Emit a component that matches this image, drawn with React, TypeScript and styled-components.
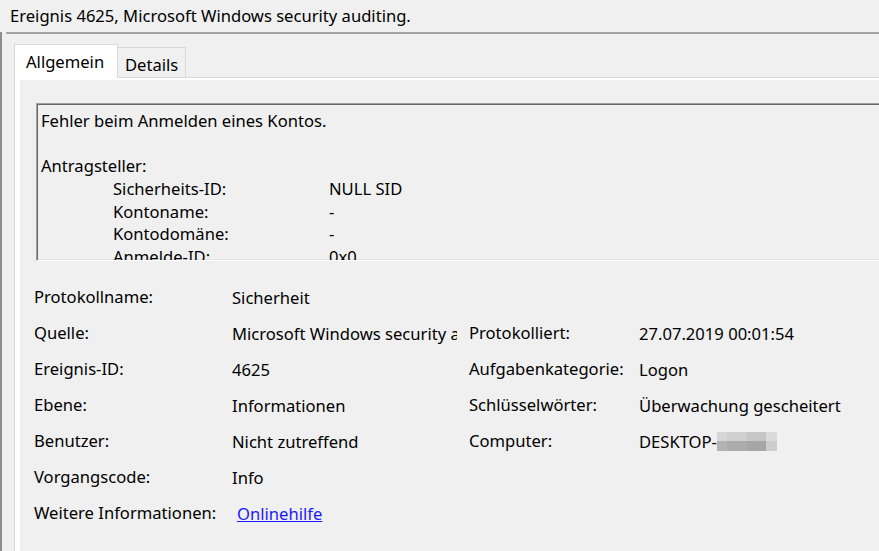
import React from 'react'
import styled, { createGlobalStyle } from 'styled-components'

const GlobalStyle = createGlobalStyle`
  html, body {
    margin: 0;
    padding: 0;
    background: #f0f0f0;
    overflow: hidden;
  }
  body {
    font-family: 'Noto Sans', 'Open Sans', sans-serif;
    font-size: 16.6px;
    color: #000;
  }
`

const Window = styled.div`
  display: flex;
  flex-direction: column;
  height: 100vh;
  width: 100vw;
`

const Title = styled.div`
  height: 32px;
  line-height: 32px;
  padding-left: 10px;
  white-space: nowrap;
  flex: none;
`

const Pane = styled.div`
  flex: 1;
  display: flex;
  flex-direction: column;
  border-left: 2px solid #8c8c8c;
  min-height: 0;
`

const Rule = styled.div`
  height: 2px;
  margin-left: 4px;
  background: #a3a3a3;
  flex: none;
`

const Body = styled.div`
  flex: 1;
  display: flex;
  flex-direction: column;
  padding: 10px 0 0 12px;
  min-height: 0;
`

const TabStrip = styled.div`
  display: flex;
  align-items: flex-end;
  height: 33px;
  flex: none;
`

const Tab = styled.div<{ $active?: boolean }>`
  box-sizing: border-box;
  position: relative;
  z-index: ${p => (p.$active ? 1 : 0)};
  height: ${p => (p.$active ? '34px' : '30px')};
  margin-bottom: ${p => (p.$active ? '-1px' : '0')};
  margin-left: ${p => (p.$active ? '0' : '-1px')};
  width: ${p => (p.$active ? '104px' : '69px')};
  padding: 6px 0 0 ${p => (p.$active ? '11px' : '7px')};
  line-height: 22px;
  background: ${p => (p.$active ? '#ffffff' : '#f0f0f0')};
  border: 1px solid #d9d9d9;
  border-bottom: none;
`

const Panel = styled.div`
  flex: 1;
  display: flex;
  border-top: 1px solid #d9d9d9;
  border-left: 1px solid #d9d9d9;
  background: #ffffff;
  padding: 2px 0 0 5px;
  min-height: 0;
`

const PanelInner = styled.div`
  flex: 1;
  background: #f0f0f0;
  padding: 23px 0 0 14px;
  overflow: hidden;
`

const DescBox = styled.div`
  box-sizing: border-box;
  width: 900px;
  height: 158px;
  margin-left: 2px;
  border-top: 1px solid #a0a0a0;
  border-left: 1px solid #a0a0a0;
  border-bottom: 1px solid #ffffff;
  box-shadow: inset 1px 1px 0 #696969, inset 0 -1px 0 #e3e3e3;
  padding: 6px 0 0 4px;
  overflow: hidden;
  line-height: 22.7px;
  white-space: nowrap;
`

const DescLine = styled.div`
  height: 22.7px;
`

const DescField = styled.div`
  display: flex;
  padding-left: 72px;
`

const DescLabel = styled.span`
  width: 216px;
  flex: none;
`

const InfoGrid = styled.div`
  display: grid;
  grid-template-columns: 198px 237px 170px 1fr;
  grid-auto-rows: 36px;
  margin-top: 18px;
  align-items: center;
  white-space: nowrap;
`

const Label = styled.div`
  margin-top: -2px;
`

const Value = styled.div<{ $span?: number }>`
  overflow: hidden;
  display: flex;
  align-items: center;
  margin-right: 12px;
  grid-column: span ${p => p.$span ?? 1};
`

const Link = styled.a`
  color: #1a1aff;
  text-decoration: underline;
  margin-left: 5px;
  cursor: pointer;
`

const Mosaic = styled.span`
  display: inline-grid;
  grid-template-columns: 10px 20px 19px 11px;
  grid-template-rows: 9px 10px;
  margin-top: 1px;
`

const Cell = styled.span<{ $c: string }>`
  background: ${p => p.$c};
`

const mosaicColors = [
  '#d6d6d6', '#cfcfcf', '#c6c6c6', '#dadada',
  '#b3b3b3', '#ababab', '#a6a6a6', '#cdcdcd',
]

const descFields: [string, string][] = [
  ['Sicherheits-ID:', 'NULL SID'],
  ['Kontoname:', '-'],
  ['Kontodomäne:', '-'],
  ['Anmelde-ID:', '0x0'],
]

const App = () => {
  return (
    <Window>
      <GlobalStyle />
      <Title>Ereignis 4625, Microsoft Windows security auditing.</Title>
      <Pane>
        <Rule />
        <Body>
          <TabStrip>
            <Tab $active>Allgemein</Tab>
            <Tab>Details</Tab>
          </TabStrip>
          <Panel>
            <PanelInner>
              <DescBox>
                <DescLine>Fehler beim Anmelden eines Kontos.</DescLine>
                <DescLine />
                <DescLine>Antragsteller:</DescLine>
                {descFields.map(([k, v]) => (
                  <DescField key={k}>
                    <DescLabel>{k}</DescLabel>
                    <span>{v}</span>
                  </DescField>
                ))}
              </DescBox>
              <InfoGrid>
                <Label>Protokollname:</Label>
                <Value $span={3}>Sicherheit</Value>

                <Label>Quelle:</Label>
                <Value>Microsoft Windows security auditing.</Value>
                <Label>Protokolliert:</Label>
                <Value>27.07.2019 00:01:54</Value>

                <Label>Ereignis-ID:</Label>
                <Value>4625</Value>
                <Label>Aufgabenkategorie:</Label>
                <Value>Logon</Value>

                <Label>Ebene:</Label>
                <Value>Informationen</Value>
                <Label>Schlüsselwörter:</Label>
                <Value>Überwachung gescheitert</Value>

                <Label>Benutzer:</Label>
                <Value>Nicht zutreffend</Value>
                <Label>Computer:</Label>
                <Value>
                  DESKTOP-
                  <Mosaic>
                    {mosaicColors.map((c, i) => (
                      <Cell key={i} $c={c} />
                    ))}
                  </Mosaic>
                </Value>

                <Label>Vorgangscode:</Label>
                <Value $span={3}>Info</Value>

                <Label>Weitere Informationen:</Label>
                <Value $span={3}>
                  <Link>Onlinehilfe</Link>
                </Value>
              </InfoGrid>
            </PanelInner>
          </Panel>
        </Body>
      </Pane>
    </Window>
  )
}

export default App
